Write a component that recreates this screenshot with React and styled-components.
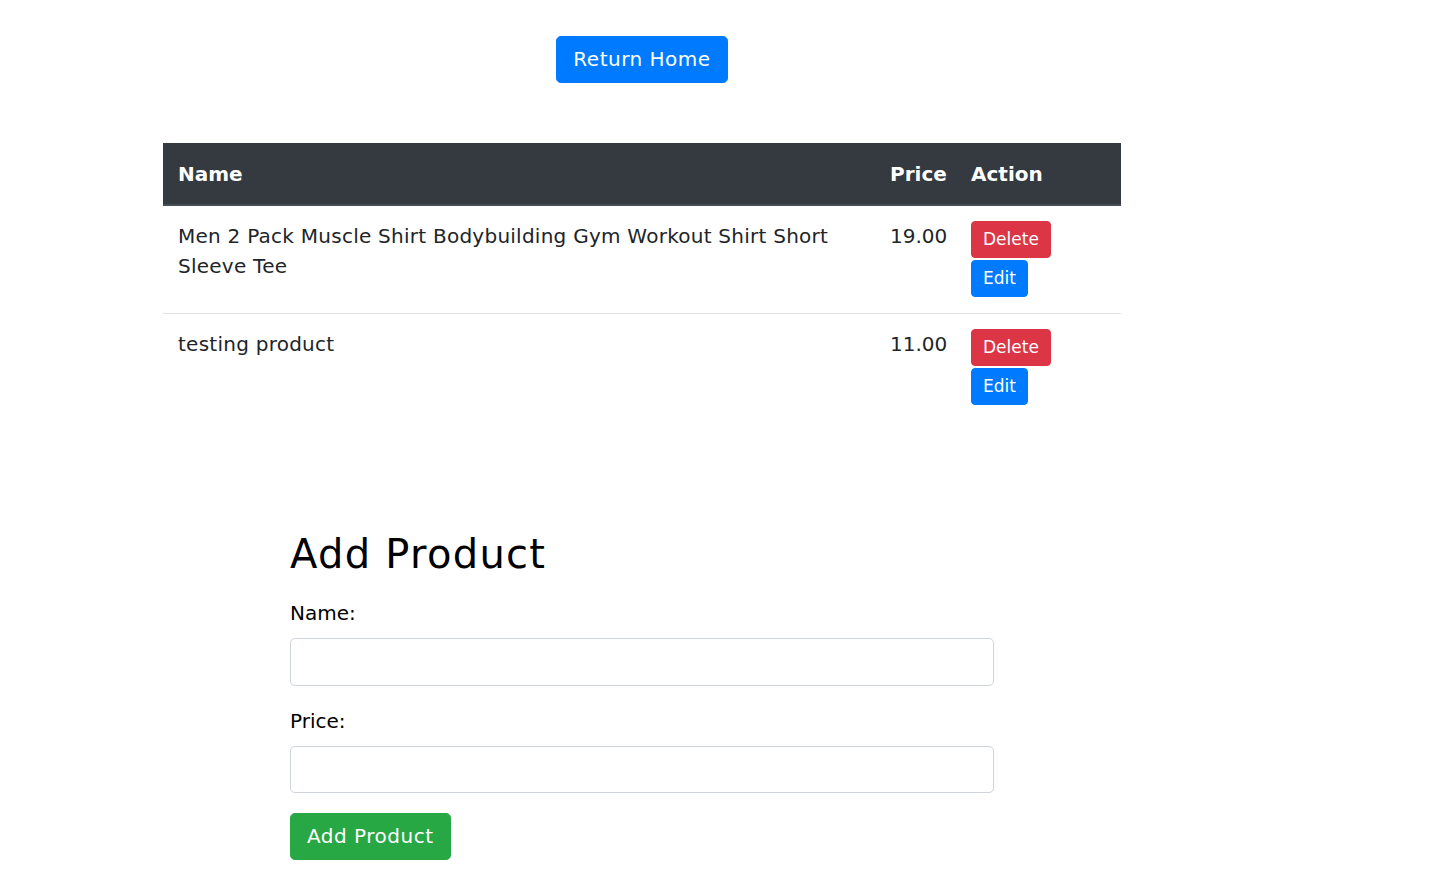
import React from "react";
import styled, { createGlobalStyle } from "styled-components";

const GlobalStyle = createGlobalStyle`
  html, body { margin: 0; padding: 0; background: #fff; }
  body {
    font-family: "DejaVu Sans", "Liberation Sans", sans-serif;
    color: #212529;
    font-size: 20px;
    line-height: 1.5;
  }
  * { box-sizing: border-box; }
`;

const Page = styled.div`
  width: 958px;
  margin-left: 163px;
  padding-top: 36px;
  padding-bottom: 29px;
  display: flex;
  flex-direction: column;
`;

const TopBar = styled.div`
  display: flex;
  justify-content: center;
  margin-bottom: 60px;
`;

const Button = styled.button`
  font-family: inherit;
  color: #fff;
  border: 1px solid ${(p) => p.$bg};
  background: ${(p) => p.$bg};
  border-radius: ${(p) => (p.$large ? "4.8px" : "4px")};
  font-size: ${(p) => (p.$large ? "20px" : "17px")};
  line-height: ${(p) => (p.$large ? "29px" : "23px")};
  letter-spacing: ${(p) => (p.$large ? "0.5px" : "0")};
  padding: ${(p) => (p.$large ? "8px 16px" : "6px 11px")};
  cursor: pointer;
  display: inline-block;
  align-self: flex-start;
`;

const Table = styled.table`
  width: 100%;
  table-layout: fixed;
  border-collapse: collapse;
  font-size: 20px;
  line-height: 30px;
`;

const HeadCell = styled.th`
  background: #343a40;
  color: #fff;
  font-weight: 700;
  text-align: left;
  padding: 15px;
  border-top: 1px solid #343a40;
  border-bottom: 2px solid #454d55;
  width: ${(p) => p.$w || "auto"};
  white-space: nowrap;
`;

const Cell = styled.td`
  padding: 15px 15px 16px;
  vertical-align: top;
  letter-spacing: 0.25px;
  border-top: ${(p) => (p.$first ? "none" : "1px solid #dee2e6")};
`;

const PriceCell = styled(Cell)`
  letter-spacing: 0;
`;

const ActionStack = styled.div`
  display: flex;
  flex-direction: column;
  align-items: flex-start;
  gap: 2px;
`;

const FormSection = styled.form`
  width: 704px;
  align-self: center;
  margin-top: 109px;
  display: flex;
  flex-direction: column;
`;

const Heading = styled.h1`
  margin: 0 0 20px;
  font-size: 40px;
  line-height: 48px;
  font-weight: 400;
  letter-spacing: 1.3px;
  color: #000;
`;

const Group = styled.div`
  display: flex;
  flex-direction: column;
  margin-bottom: 20px;
`;

const Label = styled.label`
  font-size: 20px;
  line-height: 30px;
  margin-bottom: 10px;
  color: #000;
`;

const Input = styled.input`
  height: ${(p) => p.$h || "48px"};
  width: 100%;
  border: 1px solid #ced4da;
  border-radius: 4.8px;
  padding: 8px 16px;
  font-size: 20px;
  font-family: inherit;
`;

const products = [
  { name: "Men 2 Pack Muscle Shirt Bodybuilding Gym Workout Shirt Short Sleeve Tee", price: "19.00" },
  { name: "testing product", price: "11.00" },
];

export default function App() {
  return (
    <>
      <GlobalStyle />
      <Page>
        <TopBar>
          <Button $bg="#007bff" $large type="button">Return Home</Button>
        </TopBar>
        <Table>
          <thead>
            <tr>
              <HeadCell>Name</HeadCell>
              <HeadCell $w="81px">Price</HeadCell>
              <HeadCell $w="165px">Action</HeadCell>
            </tr>
          </thead>
          <tbody>
            {products.map((p, i) => (
              <tr key={i}>
                <Cell $first={i === 0}>{p.name}</Cell>
                <PriceCell $first={i === 0}>{p.price}</PriceCell>
                <Cell $first={i === 0}>
                  <ActionStack>
                    <Button $bg="#dc3545" type="button">Delete</Button>
                    <Button $bg="#007bff" type="button">Edit</Button>
                  </ActionStack>
                </Cell>
              </tr>
            ))}
          </tbody>
        </Table>
        <FormSection onSubmit={(e) => e.preventDefault()}>
          <Heading>Add Product</Heading>
          <Group>
            <Label>Name:</Label>
            <Input type="text" />
          </Group>
          <Group>
            <Label>Price:</Label>
            <Input type="text" $h="47px" />
          </Group>
          <Button $bg="#28a745" $large type="submit">Add Product</Button>
        </FormSection>
      </Page>
    </>
  );
}
